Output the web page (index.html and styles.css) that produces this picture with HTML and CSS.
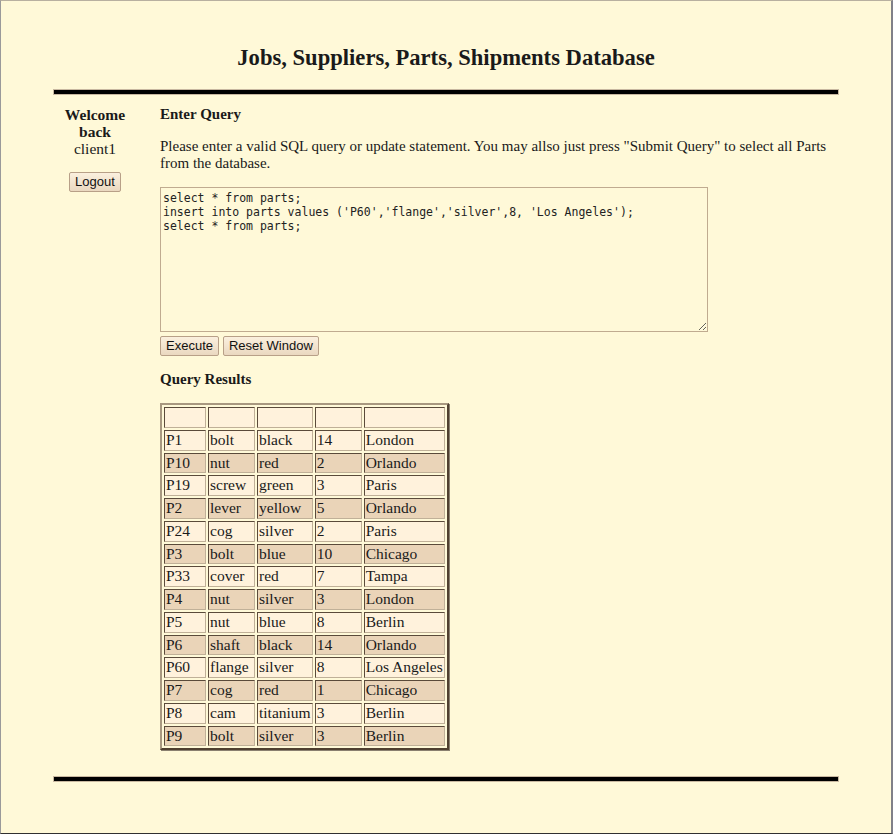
FILE: index.html
```html
<!DOCTYPE html>
<html>
<head>
<meta charset="utf-8">
<title>Jobs, Suppliers, Parts, Shipments Database</title>
<link rel="stylesheet" href="styles.css">
</head>
<body>
<div class="frame">
  <h1 class="title">Jobs, Suppliers, Parts, Shipments Database</h1>
  <div class="rule"></div>
  <div class="layout">
    <div class="side">
      <div class="welcome">Welcome<br>back</div>
      <div class="user">client1</div>
      <button class="btn logout">Logout</button>
    </div>
    <div class="main">
      <h3 class="heading">Enter Query</h3>
      <p class="intro">Please enter a valid SQL query or update statement. You may allso just press "Submit Query" to select all Parts from the database.</p>
      <textarea class="query">select * from parts;
insert into parts values ('P60','flange','silver',8, 'Los Angeles');
select * from parts;</textarea>
      <div class="actions">
        <button class="btn">Execute</button>
        <button class="btn">Reset Window</button>
      </div>
      <h3 class="heading results-head">Query Results</h3>
      <table class="results">
        <tr class="head"><td class="c1"></td><td class="c2"></td><td class="c3"></td><td class="c4"></td><td class="c5"></td></tr>
        <tr class="odd"><td>P1</td><td>bolt</td><td>black</td><td>14</td><td>London</td></tr>
        <tr class="even"><td>P10</td><td>nut</td><td>red</td><td>2</td><td>Orlando</td></tr>
        <tr class="odd"><td>P19</td><td>screw</td><td>green</td><td>3</td><td>Paris</td></tr>
        <tr class="even"><td>P2</td><td>lever</td><td>yellow</td><td>5</td><td>Orlando</td></tr>
        <tr class="odd"><td>P24</td><td>cog</td><td>silver</td><td>2</td><td>Paris</td></tr>
        <tr class="even"><td>P3</td><td>bolt</td><td>blue</td><td>10</td><td>Chicago</td></tr>
        <tr class="odd"><td>P33</td><td>cover</td><td>red</td><td>7</td><td>Tampa</td></tr>
        <tr class="even"><td>P4</td><td>nut</td><td>silver</td><td>3</td><td>London</td></tr>
        <tr class="odd"><td>P5</td><td>nut</td><td>blue</td><td>8</td><td>Berlin</td></tr>
        <tr class="even"><td>P6</td><td>shaft</td><td>black</td><td>14</td><td>Orlando</td></tr>
        <tr class="odd"><td>P60</td><td>flange</td><td>silver</td><td>8</td><td>Los Angeles</td></tr>
        <tr class="even"><td>P7</td><td>cog</td><td>red</td><td>1</td><td>Chicago</td></tr>
        <tr class="odd"><td>P8</td><td>cam</td><td>titanium</td><td>3</td><td>Berlin</td></tr>
        <tr class="even"><td>P9</td><td>bolt</td><td>silver</td><td>3</td><td>Berlin</td></tr>
      </table>
    </div>
  </div>
  <div class="rule bottom"></div>
</div>
</body>
</html>
```
FILE: styles.css
```css
html, body {
  margin: 0;
  padding: 0;
  background: #fff9d8;
}
.frame {
  box-sizing: border-box;
  min-height: 834px;
  border-top: 1px solid #b8b0a0;
  border-left: 1px solid #9a9a9a;
  border-right: 2px solid #808088;
  border-bottom: 1px solid #303030;
  font-family: "Liberation Serif", "Times New Roman", serif;
  font-size: 15px;
  color: #1a1a1a;
  padding-top: 44px;
}
.title {
  margin: 0;
  text-align: center;
  font-size: 22.6px;
  font-weight: bold;
  line-height: 26px;
}
.rule {
  margin: 18px 52px 0 52px;
  height: 4px;
  background: #000;
  border: 1px solid #c8b8a0;
}
.rule.bottom {
  margin-top: 26px;
}
.layout {
  display: flex;
  margin: 0 52px;
  gap: 23px;
}
.side {
  width: 84px;
  flex: none;
  text-align: center;
  padding-top: 11px;
  line-height: 17px;
  font-size: 15.5px;
}
.welcome {
  font-weight: bold;
}
.user {
  margin-bottom: 15px;
}
.main {
  flex: 1;
  padding-top: 10px;
}
.heading {
  margin: 0;
  font-size: 15px;
  font-weight: bold;
  line-height: 19px;
}
.intro {
  margin: 14px 0 15px 0;
  line-height: 17px;
}
.query {
  display: block;
  box-sizing: border-box;
  width: 548px;
  height: 145px;
  margin: 0;
  padding: 3px 2px;
  background: #fff9d8;
  border: 1px solid #c0ab90;
  font-family: "DejaVu Sans Mono", "Liberation Mono", monospace;
  font-size: 11.5px;
  line-height: 14px;
  color: #222;
  resize: both;
}
.actions {
  display: flex;
  gap: 4px;
  margin-top: 4px;
}
.btn {
  font-family: "Liberation Sans", Arial, sans-serif;
  font-size: 13px;
  color: #111;
  background: linear-gradient(#fbf0de, #ead8c0);
  border: 1px solid #b8a088;
  border-radius: 2px;
  padding: 1px 5px;
  height: 20px;
  line-height: 16px;
}
.results-head {
  margin-top: 14px;
}
.results {
  margin-top: 14px;
  border-collapse: separate;
  border-spacing: 2px;
  border: 2px solid;
  border-color: #a89880 #504030 #504030 #a89880;
  box-shadow: 1px 1px 0 #8a8070;
}
.results td {
  border: 1px solid;
  border-color: #5a4a3a #c0b098 #c0b098 #5a4a3a;
  padding: 0 1px;
  height: 18.75px;
  line-height: 18.75px;
  font-size: 15.5px;
  white-space: nowrap;
}
.results .c1 { width: 38px; }
.results .c2 { width: 43px; }
.results .c3 { width: 49px; }
.results .c4 { width: 43px; }
.results .c5 { width: 75px; }
.results tr.head td, .results tr.odd td {
  background: #fff2dc;
}
.results tr.even td {
  background: #ead4b8;
}
```
